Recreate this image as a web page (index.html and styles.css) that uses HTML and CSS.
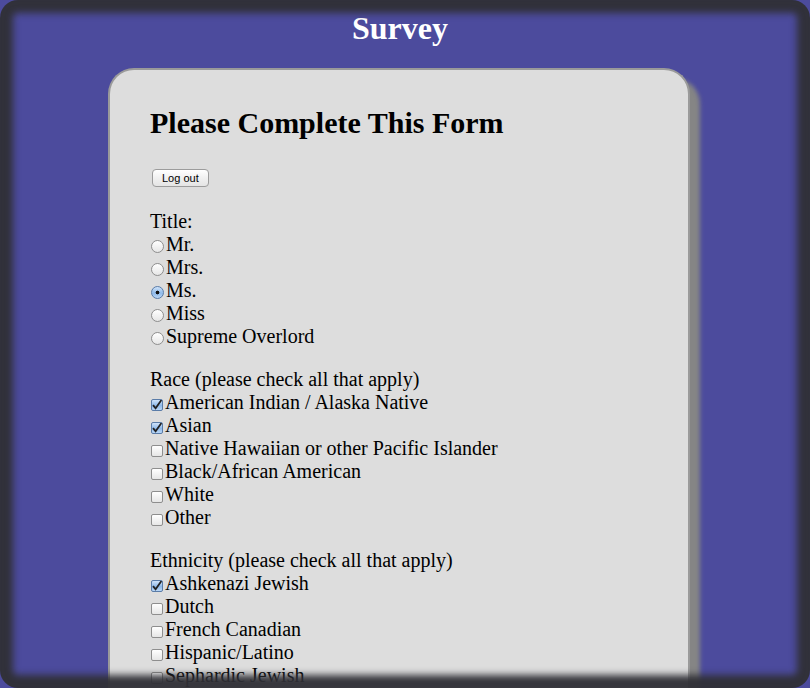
FILE: index.html
```html
<!DOCTYPE html>
<html lang="en">
<head>
<meta charset="utf-8">
<title>Survey</title>
<link rel="stylesheet" href="styles.css">
</head>
<body>
<div class="page">
  <h1 class="site-title">Survey</h1>
  <main class="card">
    <h2 class="form-title">Please Complete This Form</h2>
    <div class="logout-row"><button class="logout" type="button">Log out</button></div>
    <form class="survey">
      <div class="group">
        <div class="label">Title:</div>
        <label class="opt"><input type="radio" name="title">Mr.</label>
        <label class="opt"><input type="radio" name="title">Mrs.</label>
        <label class="opt"><input type="radio" name="title" checked>Ms.</label>
        <label class="opt"><input type="radio" name="title">Miss</label>
        <label class="opt"><input type="radio" name="title">Supreme Overlord</label>
      </div>
      <div class="group">
        <div class="label">Race (please check all that apply)</div>
        <label class="opt"><input type="checkbox" checked>American Indian / Alaska Native</label>
        <label class="opt"><input type="checkbox" checked>Asian</label>
        <label class="opt"><input type="checkbox">Native Hawaiian or other Pacific Islander</label>
        <label class="opt"><input type="checkbox">Black/African American</label>
        <label class="opt"><input type="checkbox">White</label>
        <label class="opt"><input type="checkbox">Other</label>
      </div>
      <div class="group">
        <div class="label">Ethnicity (please check all that apply)</div>
        <label class="opt"><input type="checkbox" checked>Ashkenazi Jewish</label>
        <label class="opt"><input type="checkbox">Dutch</label>
        <label class="opt"><input type="checkbox">French Canadian</label>
        <label class="opt"><input type="checkbox">Hispanic/Latino</label>
        <label class="opt"><input type="checkbox">Sephardic Jewish</label>
        <label class="opt"><input type="checkbox">Other</label>
      </div>
    </form>
  </main>
</div>
<div class="frame"></div>
</body>
</html>
```

FILE: styles.css
```css
html, body {
  margin: 0;
  padding: 0;
  height: 100%;
}
body {
  background: #4c4b9d;
  font-family: "Liberation Serif", "Times New Roman", serif;
  font-size: 20px;
  color: #000;
  overflow: hidden;
}
.page {
  padding: 0 10px 0 0;
}
.site-title {
  margin: 0;
  padding-top: 10px;
  height: 58px;
  font-size: 32px;
  line-height: 37px;
  font-weight: bold;
  color: #fff;
  text-align: center;
}
.card {
  width: 518px;
  margin: 0 0 0 calc(50% - 292px);
  padding: 13px 20px 40px 40px;
  background: #dddddd;
  border: 2px solid #9a9a9a;
  border-bottom: none;
  border-radius: 26px 26px 0 0;
  box-shadow: 10px 10px 4px #858585;
  min-height: 700px;
}
.form-title {
  margin: 23px 0 0 0;
  font-size: 30px;
  line-height: 34px;
  font-weight: bold;
}
.logout-row {
  margin-top: 24px;
  height: 26px;
  padding-left: 2px;
}
.logout {
  font-family: "Liberation Sans", Arial, sans-serif;
  font-size: 11px;
  height: 18px;
  padding: 0 9px;
  border: 1px solid #9c9c9c;
  border-radius: 4px;
  background: linear-gradient(#ffffff, #f0f0f0 50%, #e4e4e4);
  color: #000;
  line-height: 16px;
}
.survey {
  margin-top: 20px;
}
.group {
  margin-bottom: 20px;
}
.label, .opt {
  display: block;
  height: 23px;
  line-height: 23px;
}
.opt {
  display: flex;
  align-items: center;
}
.opt input {
  -webkit-appearance: none;
  appearance: none;
  margin: 3px 2px 0 1px;
  flex: none;
}
.opt input[type="radio"] {
  width: 13px;
  height: 13px;
  border-radius: 50%;
  border: 1px solid #8e8e8e;
  background: linear-gradient(#ffffff, #e6e6e6);
}
.opt input[type="radio"]:checked {
  border-color: #5a7ca8;
  background:
    radial-gradient(circle, #111 0, #111 1.6px, transparent 2.2px),
    linear-gradient(#cfe3fa, #8fbaea 55%, #b9d6f6);
}
.opt input[type="checkbox"] {
  width: 12px;
  height: 12px;
  margin-top: 5px;
  border-radius: 2px;
  border: 1px solid #8e8e8e;
  background: linear-gradient(#ffffff, #e6e6e6);
}
.opt input[type="checkbox"]:checked {
  border-color: #5a7ca8;
  background:
    url("data:image/svg+xml;utf8,<svg xmlns='http://www.w3.org/2000/svg' viewBox='0 0 12 12'><path d='M2 6.2 L4.6 9.2 L10.6 0.8' fill='none' stroke='%23222' stroke-width='1.8'/></svg>") center/12px 12px no-repeat,
    linear-gradient(#cfe3fa, #8fbaea 55%, #b9d6f6);
}
.frame {
  position: fixed;
  inset: 0;
  pointer-events: none;
  border-radius: 18px;
  box-shadow: inset 0 0 7px 13px rgba(48, 48, 54, 0.96);
}
```
